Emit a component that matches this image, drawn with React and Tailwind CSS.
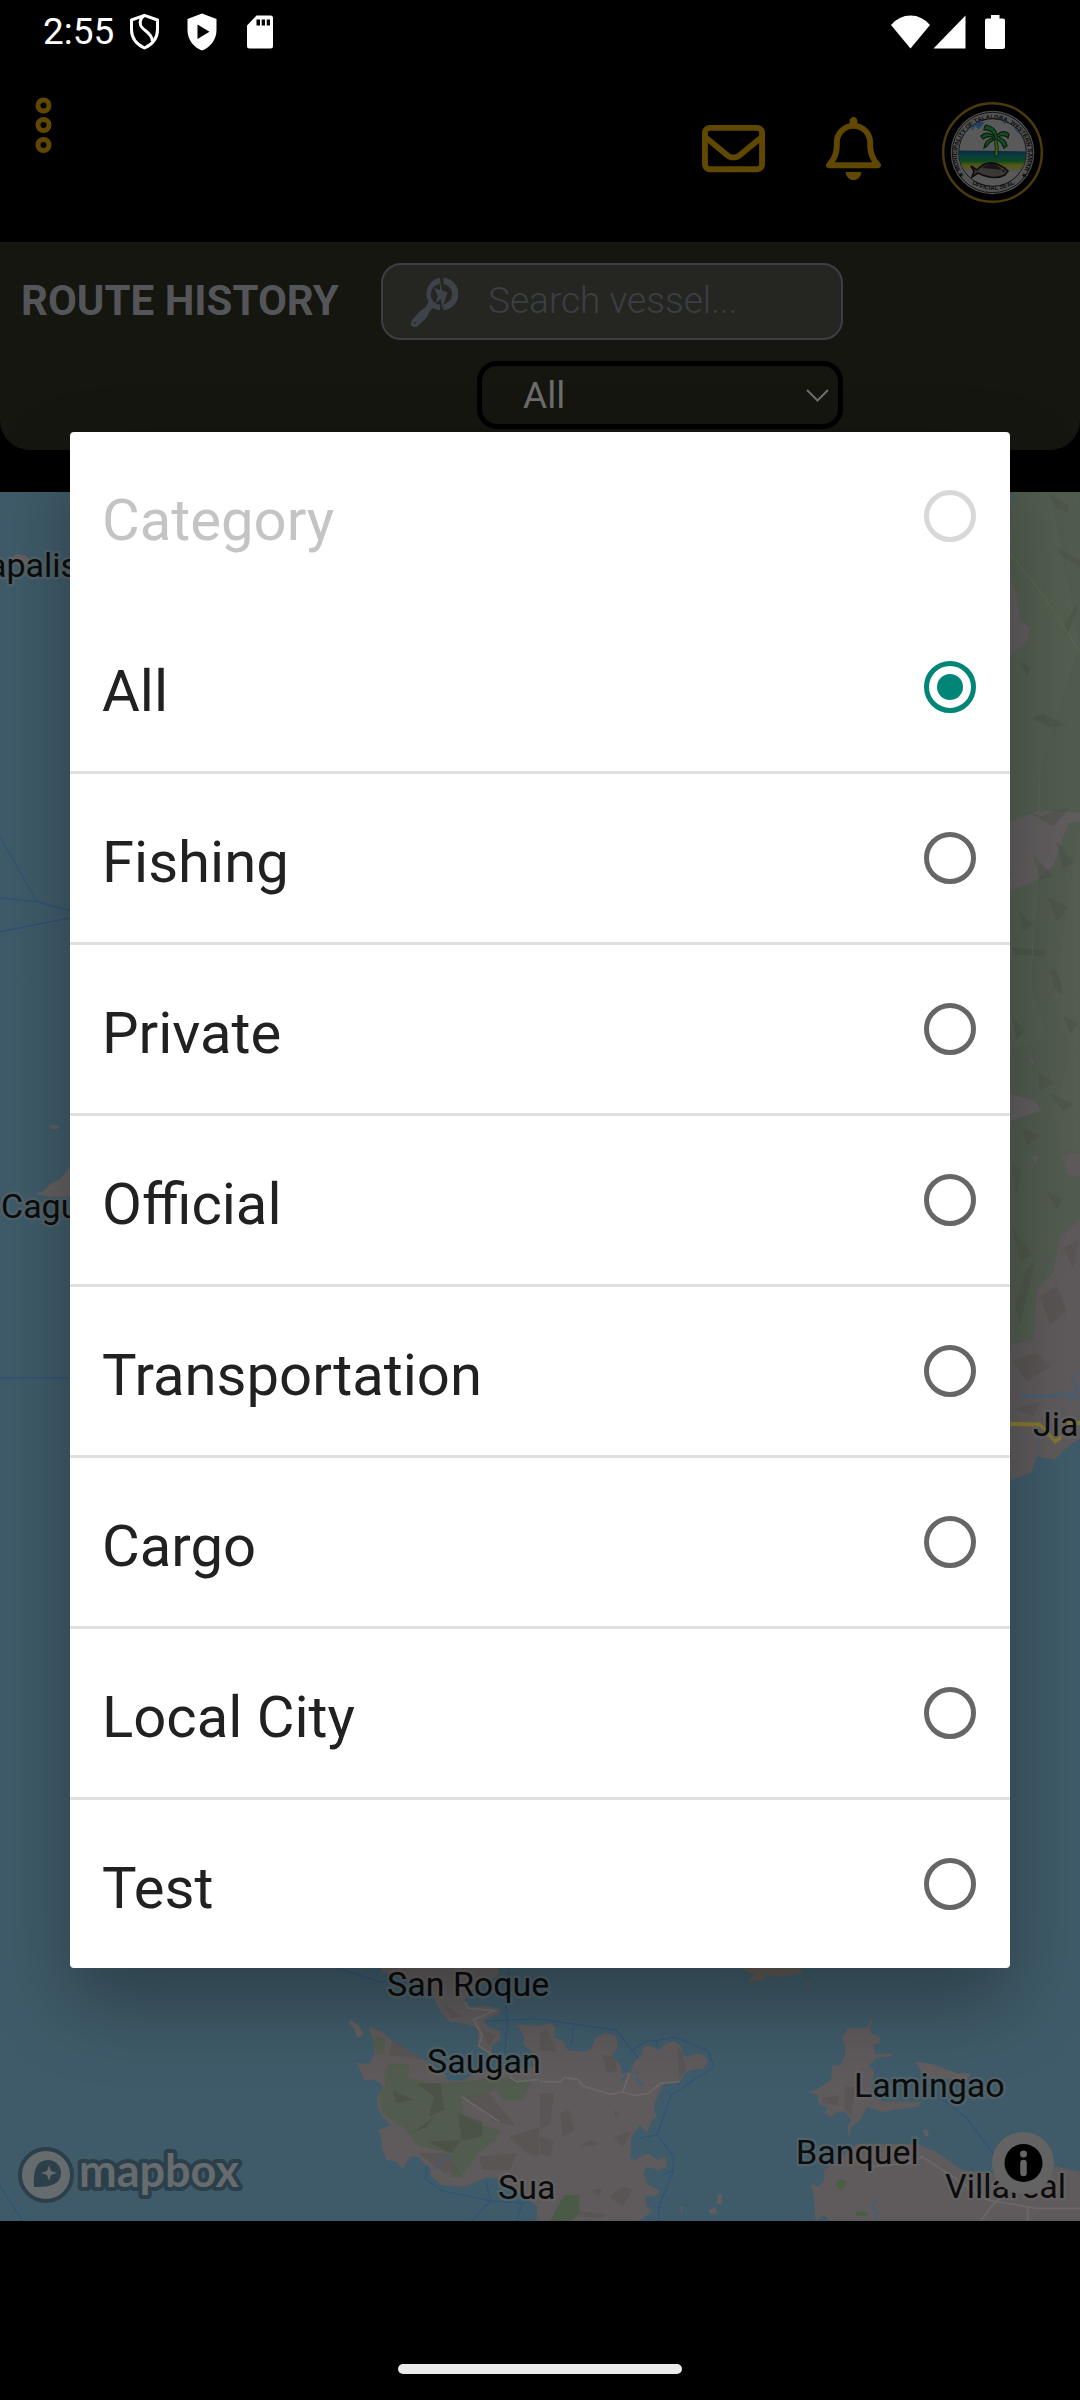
import React, { useState } from "react";
import { FaRegBell, FaRegEnvelope } from "react-icons/fa6";

const CATEGORIES = [
  "All",
  "Fishing",
  "Private",
  "Official",
  "Transportation",
  "Cargo",
  "Local City",
  "Test",
];

function StatusBar() {
  return (
    <div className="flex h-[63px] items-center justify-between pr-[75px] pl-[43px] text-white">
      <div className="flex items-center">
        <span className="w-[86px] text-[37px] leading-none">2:55</span>
        <svg className="mr-[27px] h-[37px] w-[31px]" viewBox="0 0 31 37" fill="none" stroke="currentColor" strokeWidth="3">
          <path d="M15.500 2.300L28.500 7V16.500C28.500 25 23 31.500 15.500 35C8 31.500 2.500 25 2.500 16.500V7Z" strokeLinejoin="round" />
          <path d="M15.500 2.500C11.500 5 10.500 8 11.500 12C13 17.500 23.500 19.500 23.300 28" />
        </svg>
        <svg className="mr-[30px] h-[38px] w-[30px]" viewBox="0 0 30 38" fill="currentColor">
          <path fillRule="evenodd" d="M15 .5L29.500 6V17C29.500 27 23 34.500 15 37.500C7 34.500 .5 27 .5 17V6ZM10.500 11.500V26L22.500 18.700Z" />
        </svg>
        <svg className="h-[34px] w-[26px]" viewBox="0 0 26 34" fill="currentColor">
          <path fillRule="evenodd" d="M9.500 .5H23.500Q26 .5 26 3V31Q26 33.500 23.500 33.500H2.500Q0 33.500 0 31V10.500ZM9.500 4.500V10.500H13V4.500ZM14.700 4.500V10.500H18V4.500ZM19.700 4.500V10.500H23V4.500Z" />
        </svg>
      </div>
      <div className="flex items-center">
        <svg className="mr-[3px] h-[34px] w-[39px]" viewBox="0 0 39 34" fill="currentColor">
          <path d="M0 10Q8 .5 19.500 .5T39 10L19.500 33.500Z" />
        </svg>
        <svg className="mr-[19px] h-[34px] w-[33px]" viewBox="0 0 33 34" fill="currentColor">
          <path d="M32.500 .5V33.500H.5Z" />
        </svg>
        <svg className="h-[34px] w-[20px]" viewBox="0 0 20 34" fill="currentColor">
          <path d="M6 0H14.500V3.500H18Q20 3.500 20 5.500V32Q20 34 18 34H2Q0 34 0 32V5.500Q0 3.500 2 3.500H6Z" />
        </svg>
      </div>
    </div>
  );
}

function MunicipalSeal() {
  return (
    <svg className="size-[101px]" viewBox="0 0 101 101" role="img" aria-label="Municipality of Talalora, Western Samar official seal">
      <defs>
        <path id="sealTop" d="M24.300 76.500A35.500 35.500 0 1 1 76.700 76.500" />
        <path id="sealBottom" d="M30 81.800A39.800 39.800 0 0 0 72.500 81.800" />
        <clipPath id="sealDisc"><circle cx="50.500" cy="50.500" r="33.500" /></clipPath>
        <linearGradient id="sealSea" x1="0" y1="0" x2="0" y2="1">
          <stop offset="0" stopColor="#0a2a3c" />
          <stop offset=".25" stopColor="#0a3c42" />
          <stop offset=".5" stopColor="#0c4a1c" />
          <stop offset=".68" stopColor="#565616" />
          <stop offset="1" stopColor="#555555" />
        </linearGradient>
      </defs>
      <circle cx="50.500" cy="50.500" r="49.300" fill="#000" stroke="#4d3a08" strokeWidth="2.400" />
      <circle cx="50.500" cy="50.500" r="41.800" fill="#525252" />
      <circle cx="50.500" cy="50.500" r="40.200" fill="none" stroke="#151515" strokeWidth="1" />
      <circle cx="50.500" cy="50.500" r="33.800" fill="#595959" stroke="#151515" strokeWidth="1" />
      <g clipPath="url(#sealDisc)">
        <path d="M28 20H43L37 27L33 24L30 29ZM58 15H68L74 22L70 24L66 20L62 22ZM68 20L82 26L79 33L74 29Z" fill="#24435f" />
        <path d="M15 48.500L86 49.500V70H15Z" fill="url(#sealSea)" />
        <path d="M52 37Q54.500 46 52.500 54H56Q57 45 54.500 36Z" fill="#365f18" stroke="#0b1d0b" strokeWidth=".8" />
        <path d="M53 35Q45 28 39 34L41 37Q47 33 52 36Q43 37 42 46L45 44Q48 39 54 37Q60 40 62 46L65 44Q64 37 56 35Q62 32 66 36L67 32Q61 27 55 33Q54 25 44 23Q42 25 42 28Q50 27 53 35Z" fill="#124f26" stroke="#0b1d0b" strokeWidth="1.200" />
        <path d="M29 64L35 68Q44 58 55 62Q62 65 66 69L63 73Q52 79 36 71L30 75L32 69Z" fill="#3d3737" stroke="#100c0c" strokeWidth="1.600" />
        <path d="M40 66Q50 58 56 64L60 68L52 67Z" fill="#1a1515" />
        <circle cx="61.500" cy="69" r="1" fill="#0a0a0a" />
      </g>
      <text className="font-['Liberation_Sans'] text-[6px] font-bold" fill="#0b0b0b">
        <textPath href="#sealTop" startOffset="50%" textAnchor="middle">★ MUNICIPALITY  OF  TALALORA,  WESTERN  SAMAR ★</textPath>
      </text>
      <text className="font-['Liberation_Sans'] text-[6px] font-bold" fill="#0b0b0b">
        <textPath href="#sealBottom" startOffset="50%" textAnchor="middle">OFFICIAL SEAL</textPath>
      </text>
    </svg>
  );
}

function AppHeader() {
  return (
    <header className="flex h-[179px] items-start justify-between pr-[37px] pl-[35px] text-[#604803]">
      <button type="button" aria-label="Menu" className="mt-[34px]">
        <svg className="h-[56px] w-[17px]" viewBox="0 0 17 56" fill="none" stroke="currentColor" strokeWidth="5">
          <circle cx="8.500" cy="8.500" r="5.500" />
          <circle cx="8.500" cy="28" r="5.500" />
          <circle cx="8.500" cy="48" r="5.500" />
        </svg>
      </button>
      <div className="mt-[39px] flex items-center gap-[61px]">
        <button type="button" aria-label="Messages" className="pb-2"><FaRegEnvelope className="size-[63px]" /></button>
        <button type="button" aria-label="Notifications" className="pb-2"><FaRegBell className="h-[63px] w-[55px]" /></button>
        <button type="button" aria-label="Account"><MunicipalSeal /></button>
      </div>
    </header>
  );
}

function SearchIcon() {
  return (
    <svg className="h-[50px] w-[48px] shrink-0" viewBox="0 0 48 50" fill="#3e4249">
      <path d="M30 .8A16.300 16.300 0 0 0 18.500 25L15.500 30L10 34L2 43Q-.5 47 2 49Q5 51.500 9 48L17 40L20 34L23 31Q26 33 30 33.300V27.500A10.300 10.300 0 0 1 30 7Z" />
      <path d="M33.500 .8A16.300 16.300 0 0 1 33.500 33.300V27.300A10.300 10.300 0 0 0 33.500 7Z" />
      <path d="M30.500 2L32 13.500L37.500 15.500L32 32L31 22L25.500 26L28 19L24 11L30 13Z" />
      <circle cx="4.700" cy="46" r="1" fill="#252621" />
    </svg>
  );
}

function FilterPanel({ category, onCategory }) {
  return (
    <section className="flex items-start rounded-b-[30px] bg-[#151610] py-[21px]">
      <h1 className="flex h-[75px] w-[381px] items-center pl-[21px] text-[42px] leading-none font-bold whitespace-nowrap text-[#545559]">
        ROUTE HISTORY
      </h1>
      <div className="flex w-[462px] flex-col items-end gap-[21px]">
        <label className="flex h-[77px] w-full items-center gap-[30px] rounded-[20px] border-2 border-[#3c3e45] bg-[#252621] pl-[27px]">
          <SearchIcon />
          <input
            type="text"
            aria-label="Search vessel"
            placeholder="Search vessel..."
            className="w-full min-w-0 bg-transparent pb-[2px] text-[37px] font-light text-[#707070] outline-none placeholder:text-[#3c3e45]"
          />
        </label>
        <div className="grid w-[366px] items-center">
          <select
            aria-label="Category"
            value={category}
            onChange={(e) => onCategory(e.target.value)}
            className="col-start-1 row-start-1 h-[68px] w-full appearance-none rounded-[20px] border-[5px] border-black bg-[#151610] pl-[41px] text-[37px] leading-none text-[#6d6d6b]"
          >
            <option disabled>Category</option>
            {CATEGORIES.map((c) => <option key={c}>{c}</option>)}
          </select>
          <svg className="pointer-events-none col-start-1 row-start-1 mr-[14px] h-[13px] w-[23px] justify-self-end" viewBox="0 0 23 13" fill="none" stroke="#6d6d6b" strokeWidth="2">
            <path d="M1 1L11.500 11.500L22 1" />
          </svg>
        </div>
      </div>
    </section>
  );
}

const LABELS = [
  { x: -12, y: 577, name: "apalis" },
  { x: 1, y: 1218, name: "Cagu" },
  { x: 1033, y: 1436, name: "Jia" },
  { x: 387, y: 1996, name: "San Roque" },
  { x: 427, y: 2073, name: "Saugan" },
  { x: 498, y: 2199, name: "Sua" },
  { x: 854, y: 2097, name: "Lamingao" },
  { x: 796, y: 2164, name: "Banquel" },
  { x: 945, y: 2198, name: "Villareal" },
];

function VesselMap() {
  return (
    <svg className="block w-full flex-1" viewBox="0 492 1080 1729" preserveAspectRatio="xMidYMid slice" role="img" aria-label="Map">
      <rect y="492" width="1080" height="1729" fill="#3f5b69" />

      {/* west strip */}
      <g transform="translate(0 480) scale(.3333 .6124)">
        <path d="M0 583L112 689L210 704M0 682L112 689M0 738L210 715M0 1466H210" fill="none" stroke="#30507a" strokeWidth="2" />
        <path d="M30 128L50 121L80 124L92 135L60 140ZM150 1053L176 1055V1059L155 1060ZM102 1166L130 1162L150 1150L180 1142L215 1118V1170L160 1171ZM68 812L74 813L72 815Z" fill="#635f5f" />
      </g>

      {/* eastern mainland */}
      <g transform="translate(940 420) scale(.3333 .7015)">
        <path d="M200 100H420V1452L380 1465L345 1482L290 1478L275 1500L200 1514Z" fill="#5f5b5c" />
        <path d="M200 100H420V1045L365 1048L380 1075L420 1080V1140L360 1165L340 1215L290 1240L280 1310L200 1320Z" fill="#525c50" />
        <path d="M200 100H330L420 320L300 500V560L270 800L320 880L200 900Z" fill="#556351" opacity=".45" />
        <path d="M205 220L230 250L240 285L268 295L262 315L210 335ZM205 575L295 557L420 560V572L385 575L340 635L294 655L205 672ZM205 960L285 970L305 985L205 1000ZM268 910L284 915L276 918ZM278 1050L298 1049L284 1060Z" fill="#625e60" />
        <path d="M420 570V1045L370 1040L340 990L390 900L340 820L380 700Z" fill="#585e52" opacity=".5" />
        <path d="M325 105L385 122V132L350 125ZM345 180L420 200V210L370 195ZM375 290L412 262L405 280L378 308ZM240 345L275 352L260 365ZM275 425L310 418L375 435L330 438ZM270 560L300 565L390 552L340 580ZM280 620L340 650L300 655ZM325 680L385 695L350 715ZM215 752L318 755V765L225 762ZM235 700L280 720L250 728ZM330 780L355 790L370 820L345 812ZM370 850L415 860L390 875ZM295 930L345 945L300 955ZM330 960L400 975L370 985ZM215 1060L245 1070L230 1105ZM250 1010L300 1020L260 1035ZM215 1150L275 1190L240 1200ZM225 1260L260 1210L285 1200L240 1290ZM320 1100L370 1110L350 1125ZM215 850L255 870L230 885ZM350 600L400 630L370 640Z" fill="#4a5246" opacity=".5" />
        <path d="M300 1250L350 1235L380 1270L330 1290ZM215 1340L290 1330L330 1350L260 1370ZM370 1180L415 1170L400 1210ZM225 1410L300 1400L280 1420Z" fill="#565150" opacity=".6" />
        <path d="M210 1431L300 1432L345 1456L365 1450M380 1430H420" fill="none" stroke="#85772f" strokeWidth="6" />
        <path d="M210 118L228 104M210 650L222 646M240 1390L320 1392L380 1388L420 1394M420 1355L395 1372L415 1380L380 1400M300 1442L290 1478" fill="none" stroke="#3c6283" strokeWidth="2.500" />
        <path d="M300 500L292 650L270 810M210 190L310 250L420 330" fill="none" stroke="#566b50" strokeWidth="2" />
      </g>

      {/* south-west islands */}
      <g transform="translate(0 1940) scale(.3444 .3333)">
        <path d="M980 84L1105 127L1190 128M1478 84L1466 180L1474 240L1465 340M1400 245L1474 240L1568 236M1240 670L1236 718L1282 752L1424 782L1516 790L1568 780M1412 728L1424 782L1370 843M1516 790L1500 843M0 740L66 843" fill="none" stroke="#30507a" strokeWidth="3" />
        <path d="M1100 75L1112 98L1180 115L1250 150L1265 185L1280 215L1305 245L1345 250L1385 265L1390 290L1385 318L1410 330L1425 352L1430 315L1452 300V275L1415 258L1405 240L1450 220L1452 210L1420 198L1360 200L1345 185L1370 150L1440 110L1452 95L1440 75Z" fill="#5f5b5c" />
        <path d="M1015 238L1040 255L1055 280L1048 292L1036 290L1028 265L1015 252Z" fill="#635f5f" />
        <path d="M1072 258L1110 275L1150 312L1235 360L1295 405L1300 420L1340 422L1390 395L1550 380L1545 335L1520 315L1522 290L1502 255L1568 258V843H1558L1560 800L1480 740L1440 715L1415 712L1350 740L1280 735L1250 705V685L1225 665L1215 650L1190 650L1170 687L1150 665L1122 660L1110 625L1108 600L1098 570L1135 555L1110 530L1096 500V462L1112 455L1110 435L1088 418L1060 422L1035 368L1070 372L1087 345L1085 300L1072 270Z" fill="#5f5b5c" />
        <path d="M1085 285L1118 296L1115 343H1092ZM1130 370L1190 372L1185 415L1260 430L1360 425L1440 410L1540 425L1520 480L1460 480L1440 450L1340 485L1350 540L1452 570L1440 600L1390 640L1340 710L1310 712L1310 640L1210 615L1180 570L1110 520L1098 462L1120 440L1115 395Z" fill="#525c4e" />
        <path d="M1210 430L1260 470L1245 530L1290 510L1280 430ZM1140 450L1200 480L1150 490ZM1195 580L1260 530L1240 560ZM1330 520L1400 545L1400 590L1350 600L1240 605L1310 640L1340 600Z" fill="#485043" opacity=".7" />
        <path d="M1140 300L1230 360L1130 345ZM1215 640L1300 640L1330 690L1290 700ZM1390 650L1500 640L1480 690L1400 690ZM1350 470L1420 460L1500 560L1440 545ZM1290 190L1340 230L1310 235ZM1400 270L1440 285L1420 320ZM1480 590L1568 560V650L1530 640Z" fill="#575251" opacity=".7" />
        <path d="M1340 470L1450 545M1350 185L1360 205L1435 212L1375 240L1400 285L1390 318L1430 345M1480 410L1500 425L1568 418" fill="none" stroke="#6a6868" strokeWidth="5" />
        <path d="M1322 642L1290 655L1262 688M1295 410L1330 420" fill="none" stroke="#3d5f78" strokeWidth="4" />
      </g>

      {/* south-east islands */}
      <g transform="translate(540 1940) scale(.3444 .3333)">
        <path d="M0 238L222 270L285 355M98 255L90 320M270 328L312 302L338 302L392 292L487 332L506 380L380 465L340 585L387 648V692L345 800V843M290 593L340 585M338 302V320M365 450L380 465M262 655L240 657L212 668M362 702L385 692M332 802H355M1150 460L1240 535L1330 660M1545 695L1560 780M1535 735H1568" fill="none" stroke="#30507a" strokeWidth="3" />
        <path d="M-3 258L30 248L45 265L40 290L70 305L80 330L130 335L150 325L160 295L190 278L222 290L225 325L210 345L235 380L240 400L262 395L275 365L295 345L300 320L320 318L345 330L370 308L390 303L410 320L412 345L430 350L455 340L480 348L487 365L475 385L440 390L420 400L405 425L360 430L340 470L330 500L338 530L322 545L310 578L290 555L265 590L262 655L275 660L315 640L340 660L365 650L368 680L345 690L310 680L300 700L315 735L345 750V765L305 770L310 800L325 815L285 843H-3Z" fill="#5f5b5c" />
        <path d="M0 280L20 270L50 335L0 330ZM180 345L215 350L225 390L195 400ZM400 320L412 345L425 390L405 415ZM0 460L40 460L30 550L0 570ZM60 520L85 510L100 570L65 590ZM0 590L40 600L30 650L0 640ZM215 510L230 520L220 535ZM215 590L265 575L240 620ZM110 620L150 600L170 615ZM200 770L240 740L270 750L240 800ZM150 750L180 745L170 770ZM110 815L190 820L180 835L120 830Z" fill="#565251" opacity=".7" />
        <path d="M70 765H115V820L90 843H28Z" fill="#4b5a47" />
        <path d="M0 424L60 426L70 413L110 418L125 438L205 463L240 456L275 467L315 460L350 430L405 425M240 456L260 400" fill="none" stroke="#6a6868" strokeWidth="5" />
        <path d="M262 395L285 400L280 420L300 438M235 425L250 405" fill="none" stroke="#3d5f78" strokeWidth="4" />
        <path d="M580 75L600 95L625 102L603 126L645 122L655 105L700 110L765 100L745 75ZM765 132L785 124L782 138ZM645 175L656 178L650 180Z" fill="#5e5954" />
        <path d="M895 265L950 262L972 228L958 262L960 280L985 288L988 308L970 312L972 342L1025 340L1020 348L975 355L955 375L970 395L965 430L960 470L1000 485L1105 485L1100 500L1040 508L995 516L950 500L930 540L905 560L897 588L893 560L905 540L885 515L860 518L845 530L825 520L835 505L808 490L805 465L778 455L800 450L845 420L848 378L870 375L885 350L886 310L876 292Z" fill="#5f5b5c" />
        <path d="M1088 365L1140 372L1210 400L1252 400L1240 420L1120 412ZM1112 570L1125 570L1130 585L1118 590ZM515 765L528 762V790L515 792ZM488 810L510 803L514 822L495 820ZM408 800L416 800L410 820Z" fill="#625e5f" />
        <path d="M885 440L915 440L905 525L885 505ZM820 475L870 465L865 495L820 490Z" fill="#575251" opacity=".7" />
        <path d="M920 612L1095 612L1150 635L1225 690L1320 700L1500 680L1568 695V843H840L825 825L800 843L795 770L787 732L810 740L825 720V690L850 672Z" fill="#5f5b5c" />
        <path d="M870 715L892 725L875 755L858 735ZM915 815H950V827H918Z" fill="#4a5e45" />
        <path d="M965 680L1070 670L1110 650L1190 705L1300 780L1440 805H1568M1416 800V843M1340 770L1310 800L1280 843" fill="none" stroke="#6a6868" strokeWidth="5" />
        <path d="M978 780L962 800L980 815L970 835L985 843" fill="none" stroke="#3d5f78" strokeWidth="4" />
      </g>

      {LABELS.map((l) => (
        <text key={l.name} x={l.x} y={l.y} className="text-[34px]" fill="#0c0c0c" stroke="#6b6b6b" strokeOpacity=".4" strokeWidth="5" strokeLinejoin="round" paintOrder="stroke">
          {l.name}
        </text>
      ))}

      {/* wordmark */}
      <circle cx="46" cy="2175" r="26" fill="#666b6d" stroke="#2c404b" strokeWidth="4" />
      <path d="M34 2187Q32 2160 48 2160A13 13 0 0 1 61 2173Q61 2188 34 2187Z" fill="#2c404b" />
      <path d="M49 2165L51 2171L57 2173L51 2175L49 2181L47 2175L41 2173L47 2171Z" fill="#666b6d" />
      <text x="79" y="2187" className="font-['Lato'] text-[45px] font-bold" fill="#666b6d" stroke="#2c404b" strokeWidth="8" strokeLinejoin="round" paintOrder="stroke">mapbox</text>

      {/* attribution */}
      <circle cx="1023" cy="2163" r="31" fill="#636363" />
      <circle cx="1023.500" cy="2163" r="19" fill="#000" />
      <circle cx="1023.500" cy="2154" r="3.500" fill="#666" />
      <path d="M1023.500 2163V2173" stroke="#666" strokeWidth="6.500" strokeLinecap="round" />
    </svg>
  );
}

function OptionRow({ label, ...input }) {
  return (
    <label className="flex h-[168px] items-center justify-between px-[32px] text-[#212121] has-disabled:text-[#c4c4c4]">
      <span className="pt-2 text-[58px] leading-none">{label}</span>
      <input
        type="radio"
        name="category"
        {...input}
        className="mr-[2px] size-[52px] appearance-none rounded-full border-[5px] border-[#666666] bg-clip-content p-[8px] checked:border-[#018577] checked:bg-[#018577] disabled:border-[#d8d8d8]"
      />
    </label>
  );
}

function CategoryDialog({ category, onCategory }) {
  return (
    <div className="absolute inset-0 flex items-center px-[70px]">
      <div role="dialog" aria-label="Category" className="w-full overflow-hidden rounded-[4px] bg-white shadow-[0_36px_80px_rgba(0,0,0,0.3)]">
        <div className="border-b-[3px] border-white">
          <OptionRow label="Category" disabled />
        </div>
        <ul className="divide-y-[3px] divide-[#e0e0e0]">
          {CATEGORIES.map((c) => (
            <li key={c}>
              <OptionRow label={c} checked={c === category} onChange={() => onCategory(c)} />
            </li>
          ))}
        </ul>
      </div>
    </div>
  );
}

export default function App() {
  const [category, setCategory] = useState("All");
  return (
    <div className="relative flex min-h-screen flex-col bg-black font-['Roboto',sans-serif]">
      <StatusBar />
      <AppHeader />
      <FilterPanel category={category} onCategory={setCategory} />
      <main className="mt-[42px] flex flex-1 flex-col">
        <VesselMap />
      </main>
      <footer className="flex h-[179px] items-end justify-center pb-[26px]">
        <div className="h-[10px] w-[284px] rounded-full bg-[#ebebeb]" />
      </footer>
      <CategoryDialog category={category} onCategory={setCategory} />
    </div>
  );
}
